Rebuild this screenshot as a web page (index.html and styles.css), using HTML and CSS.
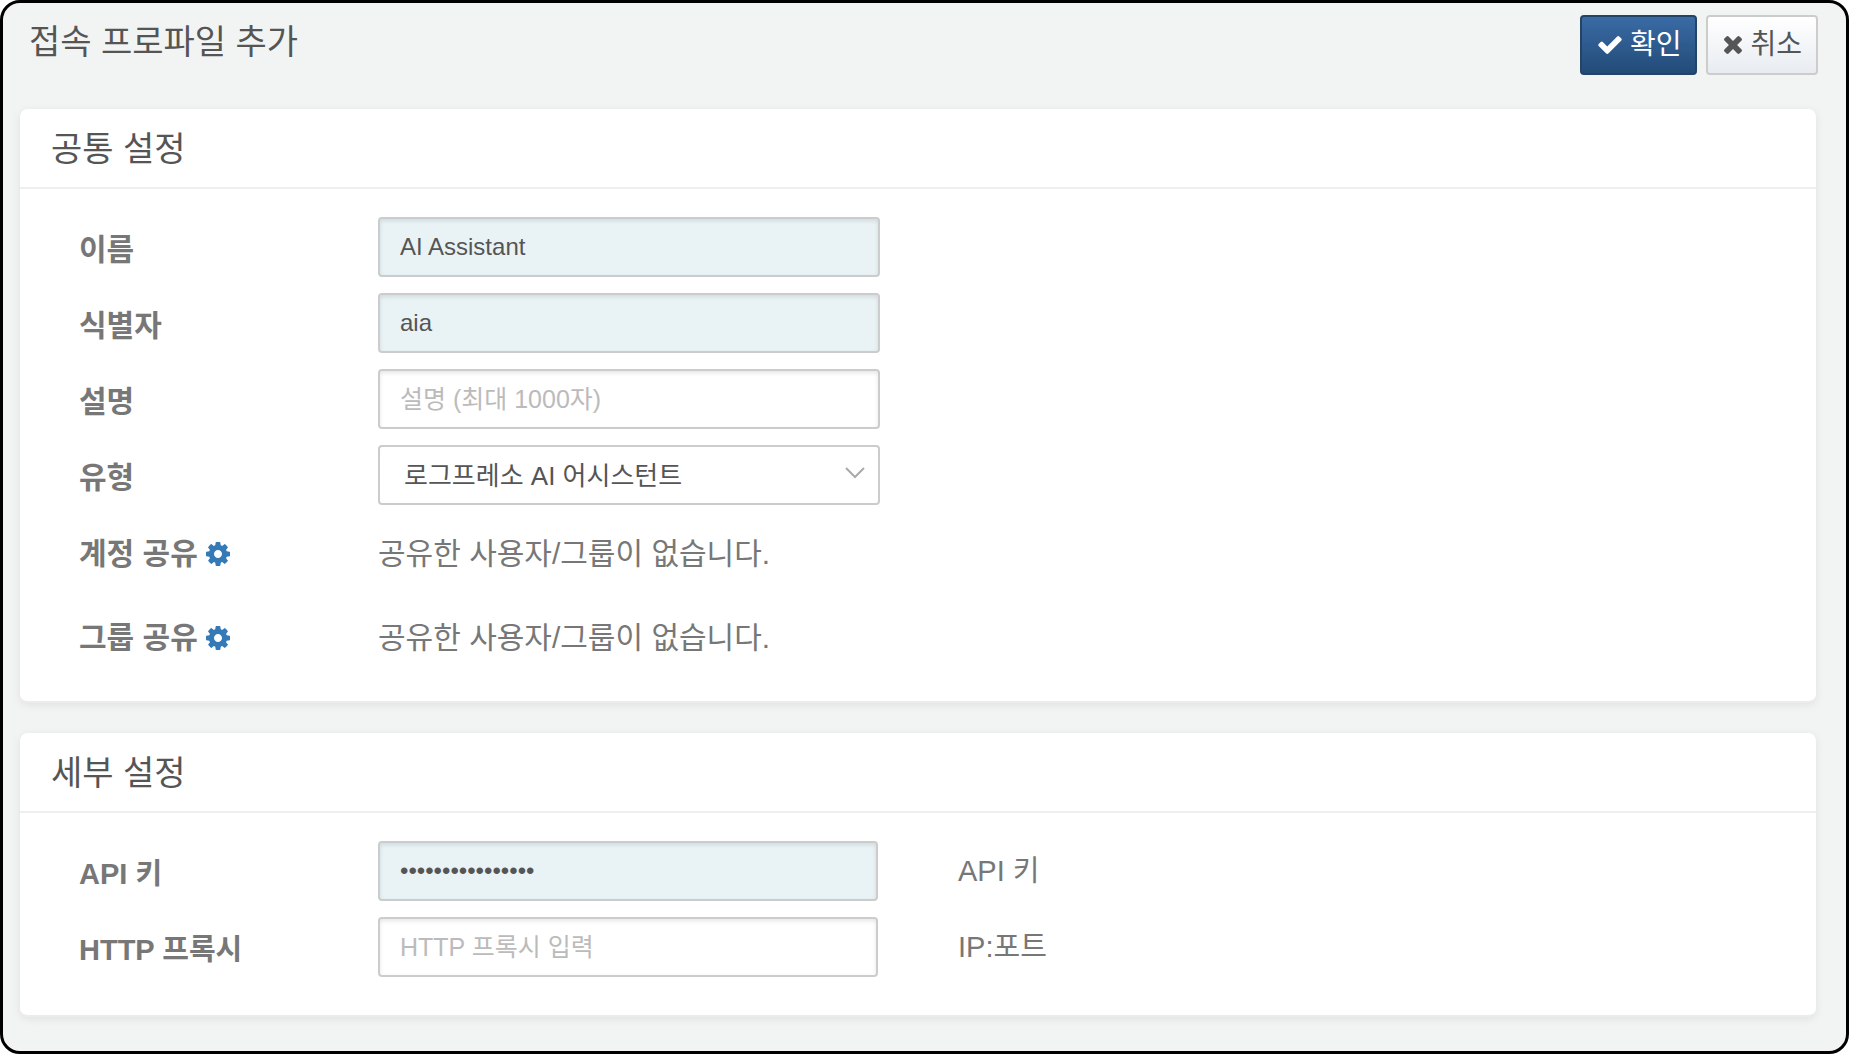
FILE: index.html
```html
<!DOCTYPE html>
<html lang="ko">
<head>
<meta charset="utf-8">
<meta name="viewport" content="width=device-width, initial-scale=1">
<title>접속 프로파일 추가</title>
<link rel="stylesheet" href="styles.css">
</head>
<body>
<form class="frame">
  <header class="page-header">
    <h1 class="title">접속 프로파일 추가</h1>
    <div class="actions">
      <button type="submit" class="btn btn-primary">
        <svg class="icon-check" viewBox="121 334 1550 1188" aria-hidden="true"><path fill="currentColor" d="M1671 566q0 40-28 68l-724 724-136 136q-28 28-68 28t-68-28l-136-136-362-362q-28-28-28-68t28-68l136-136q28-28 68-28t68 28l294 295 656-657q28-28 68-28t68 28l136 136q28 28 28 68z"/></svg>
        <span>확인</span>
      </button>
      <button type="button" class="btn btn-default">
        <svg class="icon-times" viewBox="302 366 1188 1188" aria-hidden="true"><path fill="currentColor" d="M1490 1322q0 40-28 68l-136 136q-28 28-68 28t-68-28l-294-294-294 294q-28 28-68 28t-68-28l-136-136q-28-28-28-68t28-68l294-294-294-294q-28-28-28-68t28-68l136-136q28-28 68-28t68 28l294 294 294-294q28-28 68-28t68 28l136 136q28 28 28 68t-28 68l-294 294 294 294q28 28 28 68z"/></svg>
        <span>취소</span>
      </button>
    </div>
  </header>

  <section class="panel">
    <h2 class="panel-title">공통 설정</h2>
    <div class="panel-body">
      <div class="row">
        <label class="label" for="name">이름</label>
        <input class="control filled" id="name" type="text" value="AI Assistant">
      </div>
      <div class="row">
        <label class="label" for="code">식별자</label>
        <input class="control filled" id="code" type="text" value="aia">
      </div>
      <div class="row">
        <label class="label" for="desc">설명</label>
        <input class="control" id="desc" type="text" placeholder="설명 (최대 1000자)">
      </div>
      <div class="row">
        <label class="label" for="kind">유형</label>
        <div class="select-wrap">
          <select class="control select" id="kind"><option>로그프레소 AI 어시스턴트</option></select>
          <svg class="chevron" viewBox="0 0 20 12" aria-hidden="true"><path d="M1 1l9 9 9-9" fill="none" stroke="#aaa" stroke-width="2"/></svg>
        </div>
      </div>
      <div class="row share">
        <div class="label">계정 공유
          <button type="button" class="gear" aria-label="계정 공유 설정"><svg viewBox="128 128 1536 1536" aria-hidden="true"><path fill="currentColor" d="M1152 896q0-106-75-181t-181-75-181 75-75 181 75 181 181 75 181-75 75-181zm512-109v222q0 12-8 23t-20 13l-185 28q-19 54-39 91 35 50 107 138 10 12 10 25t-9 23q-27 37-99 108t-94 71q-12 0-26-9l-138-108q-44 23-91 38-16 136-29 186-7 28-36 28h-222q-14 0-24.5-8.5t-11.5-21.5l-28-184q-49-16-90-37l-141 107q-10 9-25 9-14 0-25-11-126-114-165-168-7-10-7-23 0-12 8-23 15-21 51-66.5t54-70.5q-27-50-41-99l-183-27q-13-2-21-12.5t-8-23.5v-222q0-12 8-23t19-13l186-28q14-46 39-92-40-57-107-138-10-12-10-24 0-10 9-23 26-36 98.5-107.5t94.5-71.5q13 0 26 10l138 107q44-23 91-38 16-136 29-186 7-28 36-28h222q14 0 24.5 8.5t11.5 21.5l28 184q49 16 90 37l142-107q9-9 24-9 13 0 25 10 129 119 165 170 7 8 7 22 0 12-8 23-15 21-51 66.5t-54 70.5q26 50 41 98l183 28q13 2 21 12.5t8 23.5z"/></svg></button>
        </div>
        <p class="note">공유한 사용자/그룹이 없습니다.</p>
      </div>
      <div class="row share">
        <div class="label">그룹 공유
          <button type="button" class="gear" aria-label="그룹 공유 설정"><svg viewBox="128 128 1536 1536" aria-hidden="true"><path fill="currentColor" d="M1152 896q0-106-75-181t-181-75-181 75-75 181 75 181 181 75 181-75 75-181zm512-109v222q0 12-8 23t-20 13l-185 28q-19 54-39 91 35 50 107 138 10 12 10 25t-9 23q-27 37-99 108t-94 71q-12 0-26-9l-138-108q-44 23-91 38-16 136-29 186-7 28-36 28h-222q-14 0-24.5-8.5t-11.5-21.5l-28-184q-49-16-90-37l-141 107q-10 9-25 9-14 0-25-11-126-114-165-168-7-10-7-23 0-12 8-23 15-21 51-66.5t54-70.5q-27-50-41-99l-183-27q-13-2-21-12.5t-8-23.5v-222q0-12 8-23t19-13l186-28q14-46 39-92-40-57-107-138-10-12-10-24 0-10 9-23 26-36 98.5-107.5t94.5-71.5q13 0 26 10l138 107q44-23 91-38 16-136 29-186 7-28 36-28h222q14 0 24.5 8.5t11.5 21.5l28 184q49 16 90 37l142-107q9-9 24-9 13 0 25 10 129 119 165 170 7 8 7 22 0 12-8 23-15 21-51 66.5t-54 70.5q26 50 41 98l183 28q13 2 21 12.5t8 23.5z"/></svg></button>
        </div>
        <p class="note">공유한 사용자/그룹이 없습니다.</p>
      </div>
    </div>
  </section>

  <section class="panel detail">
    <h2 class="panel-title">세부 설정</h2>
    <div class="panel-body">
      <div class="row">
        <label class="label" for="key">API 키</label>
        <input class="control filled" id="key" type="password" value="0123456789abcdef" autocomplete="off">
        <p class="help">API 키</p>
      </div>
      <div class="row">
        <label class="label" for="proxy">HTTP 프록시</label>
        <input class="control" id="proxy" type="text" placeholder="HTTP 프록시 입력">
        <p class="help">IP:포트</p>
      </div>
    </div>
  </section>
</form>
</body>
</html>
```
FILE: styles.css
```css
* {
  box-sizing: border-box;
}

body {
  margin: 0;
  background: #fff;
  color: #555;
  font-family: "Liberation Sans", "Noto Sans CJK KR", sans-serif;
}

h1,
h2,
p {
  margin: 0;
  font-weight: 400;
}

.frame {
  min-height: 100vh;
  padding: 12px 28px 32px 17px;
  border: 3px solid #000;
  border-radius: 20px;
  background: #f2f4f4;
}

.page-header {
  display: flex;
  justify-content: space-between;
  align-items: flex-start;
  margin-bottom: 34px;
  padding-left: 9px;
}

.title,
.panel-title {
  font-size: 34px;
  line-height: 54px;
}

.actions {
  display: flex;
  gap: 9px;
}

.btn {
  display: flex;
  align-items: center;
  gap: 8px;
  height: 60px;
  padding: 0 14px 0 16px;
  border: 2px solid #ccc;
  border-radius: 4px;
  font: inherit;
  font-size: 28px;
  line-height: 40px;
}

.btn-primary {
  border-color: #234466;
  background: linear-gradient(#3a6ba5, #224b78);
  color: #fff;
}

.btn-default {
  background: linear-gradient(#fff, #e8ecf1);
  color: #555;
}

.icon-check {
  width: 24px;
  height: 18px;
}

.icon-times {
  width: 18px;
  height: 18px;
}

.panel {
  margin: 0 2px 30px 0;
  border-bottom: 2px solid #ebeded;
  border-radius: 8px;
  background: #fff;
  box-shadow: 0 2px 8px rgba(0, 0, 0, 0.08);
}

.detail {
  margin-bottom: 0;
}

.panel-title {
  padding: 13px 31px 11px;
  border-bottom: 2px solid #eee;
}

.panel-body {
  display: flex;
  flex-direction: column;
  gap: 16px;
  padding: 28px 58px 28px 59px;
}

.detail .panel-body {
  padding-bottom: 38px;
}

.row {
  display: grid;
  grid-template-columns: 299fr 502fr 878fr;
}

.detail .row {
  grid-template-columns: 299fr 500fr 880fr;
}

.label {
  padding-top: 6px;
  color: #777;
  font-size: 30px;
  font-weight: 700;
  line-height: 54px;
}

.detail .label {
  font-size: 29px;
}

.control {
  width: 100%;
  height: 60px;
  padding: 0 20px;
  border: 2px solid #ccc;
  border-radius: 4px;
  background: #fff;
  box-shadow: inset 0 2px 4px rgba(0, 0, 0, 0.1);
  color: #555;
  font-family: inherit;
  font-size: 24px;
}

.control:placeholder-shown {
  font-size: 25px;
}

.control::placeholder {
  color: #bbb;
}

.filled {
  background: #e9f3f6;
}

.select-wrap {
  position: relative;
}

.select {
  padding: 2px 48px 0 24px;
  box-shadow: none;
  appearance: none;
  font-size: 26px;
}

.chevron {
  position: absolute;
  top: 22px;
  right: 15px;
  width: 20px;
  height: 12px;
  pointer-events: none;
}

.share {
  min-height: 68px;
}

.share .label {
  display: flex;
  align-items: center;
  align-self: start;
  gap: 8px;
}

.gear {
  width: 24px;
  height: 24px;
  padding: 0;
  border: 0;
  background: none;
  color: #337ab7;
}

.gear svg {
  display: block;
}

.note {
  grid-column: 2 / -1;
  color: #777;
  font-size: 30px;
  line-height: 66px;
}

.help {
  padding-left: 80px;
  color: #777;
  font-size: 29px;
  line-height: 60px;
}
```
